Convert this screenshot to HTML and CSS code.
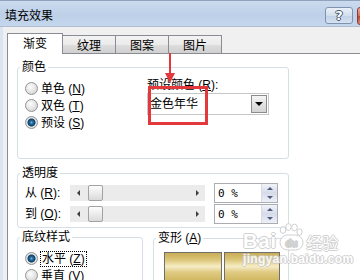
FILE: index.html
```html
<!DOCTYPE html>
<html lang="zh-CN">
<head>
    <meta charset="UTF-8">
    <title>填充效果</title>
    <link rel="stylesheet" href="styles.css">
</head>
<body>

<div class="window">

    <!-- Title bar -->
    <div class="titlebar">
        <span class="title">填充效果</span>
        <span class="help">?</span>
        <span class="close"></span>
    </div>

    <div class="client">

        <!-- Tabs -->
        <div class="tabs">
            <div class="tab active">渐变</div>
            <div class="tab">纹理</div>
            <div class="tab">图案</div>
            <div class="tab">图片</div>
        </div>

        <div class="panel">

            <!-- 颜色 -->
            <div class="group color-group">
                <div class="legend">颜色</div>
                <div class="color-body">
                    <div class="radios">
                        <div class="radio"><span class="dot"></span>单色 (<u>N</u>)</div>
                        <div class="radio"><span class="dot"></span>双色 (<u>T</u>)</div>
                        <div class="radio"><span class="dot on"></span>预设 (<u>S</u>)</div>
                    </div>
                    <div class="preset">
                        <div class="preset-label">预设颜色 (<u>R</u>):</div>
                        <div class="combo">
                            <span class="combo-text">金色年华</span>
                            <span class="combo-btn"></span>
                        </div>
                        <div class="mark-box"></div>
                        <div class="mark-arrow"></div>
                    </div>
                </div>
            </div>

            <!-- 透明度 -->
            <div class="group alpha-group">
                <div class="legend">透明度</div>
                <div class="alpha-rows">
                    <div class="alpha-row">
                        <span class="alpha-label">从 (<u>R</u>):</span>
                        <div class="slider">
                            <span class="arrow-l"></span>
                            <span class="thumb"></span>
                            <span class="arrow-r"></span>
                        </div>
                        <div class="pct">
                            <span>0 %</span>
                            <span class="spin"><i class="up"></i><i class="down"></i></span>
                        </div>
                    </div>
                    <div class="alpha-row">
                        <span class="alpha-label">到 (<u>O</u>):</span>
                        <div class="slider">
                            <span class="arrow-l"></span>
                            <span class="thumb"></span>
                            <span class="arrow-r"></span>
                        </div>
                        <div class="pct">
                            <span>0 %</span>
                            <span class="spin"><i class="up"></i><i class="down"></i></span>
                        </div>
                    </div>
                </div>
            </div>

            <!-- 底纹样式 / 变形 -->
            <div class="bottom">
                <div class="group pattern-group">
                    <div class="legend">底纹样式</div>
                    <div class="pattern-rows">
                        <div class="radio"><span class="dot on"></span><span class="focus">水平 (<u>Z</u>)</span></div>
                        <div class="radio"><span class="dot"></span>垂直 (<u>V</u>)</div>
                    </div>
                </div>
                <div class="group warp-group">
                    <div class="legend">变形 (<u>A</u>)</div>
                    <div class="swatches">
                        <div class="swatch"></div>
                        <div class="swatch second"></div>
                    </div>
                </div>
            </div>

            <!-- watermark -->
            <div class="watermark">
                <div class="wm-top">
                    <span class="wm-bai">Bai</span>
                    <svg class="wm-paw" width="26" height="28" viewBox="0 0 26 28">
                        <ellipse cx="5" cy="7" rx="2.8" ry="3.4" />
                        <ellipse cx="10.5" cy="4" rx="2.8" ry="3.4" />
                        <ellipse cx="16.5" cy="4.5" rx="2.8" ry="3.4" />
                        <ellipse cx="21.5" cy="9" rx="2.6" ry="3.2" />
                        <rect x="2" y="12" width="23" height="15" rx="7.5" />
                        <text x="13.5" y="23.5" text-anchor="middle">du</text>
                    </svg>
                    <span class="wm-jy">经验</span>
                </div>
                <div class="wm-url">jingyan.baidu.com</div>
            </div>

        </div>
    </div>
</div>

</body>
</html>
```

FILE: styles.css
```css
/* General */
* {
    margin: 0;
    padding: 0;
    box-sizing: border-box;
}

body {
    width: 360px;
    height: 280px;
    overflow: hidden;
    background: #f0f0f0;
    color: #000;
    font-family: "Liberation Sans", "Noto Sans CJK SC", sans-serif;
    font-size: 12px;
}

.window {
    width: 360px;
    height: 280px;
    overflow: hidden;
    display: flex;
    flex-direction: column;
}

/* Title bar */
.titlebar {
    height: 27px;
    flex-shrink: 0;
    display: flex;
    align-items: flex-start;
    padding-left: 5px;
    border-top: 1px solid #8fa3bd;
    border-bottom: 1px solid #aebfd4;
    background: linear-gradient(#cadbee, #bdd0e8 55%, #c4d6ec);
}

.title {
    flex: 1;
    margin-top: 7px;
    font-family: "Noto Sans CJK SC", sans-serif;
    line-height: 14px;
}

.help {
    width: 28px;
    height: 17px;
    margin-top: 6px;
    margin-right: 4px;
    flex-shrink: 0;
    display: flex;
    justify-content: center;
    align-items: center;
    border: 1px solid #7f93ae;
    border-radius: 3px;
    background: linear-gradient(#eaf0f8, #d3dfee 50%, #c0d0e6 51%, #d6e2f1);
    color: #fff;
    font: bold 13px "DejaVu Sans", sans-serif;
    text-shadow: -1px 0 #44546c, 1px 0 #44546c, 0 -1px #44546c, 0 1px #44546c;
}

.close {
    width: 43px;
    height: 18px;
    margin-top: 6px;
    margin-right: -40px;
    flex-shrink: 0;
    border: 1px solid #8b3a3a;
    border-radius: 3px;
    background: linear-gradient(#eaa99b, #d4705f 50%, #c2442f 51%, #d98b70);
}

/* Dialog body */
.client {
    flex: 1;
    display: flex;
    flex-direction: column;
    border-left: 3px solid #dbe5f1;
    padding: 6px 0 0 4px;
}

/* Tabs */
.tabs {
    display: flex;
    align-items: flex-end;
    height: 20px;
}

.tab {
    width: 54px;
    height: 18px;
    margin-left: -1px;
    padding-top: 2px;
    border: 1px solid #898c95;
    border-bottom: none;
    background: linear-gradient(#f3f3f3, #ebebeb 50%, #dedede 51%, #d0d0d0);
    text-align: center;
    line-height: 16px;
}

.tab.active {
    width: 56px;
    height: 21px;
    margin-left: 0;
    margin-bottom: -1px;
    padding-top: 2px;
    background: #fff;
    position: relative;
    z-index: 1;
}

/* Panel */
.panel {
    position: relative;
    flex: 1;
    margin-right: -40px;
    padding: 13px 0 0 9px;
    border: 1px solid #898c95;
    background: #fff;
}

.group {
    border: 1px solid #d5dfe5;
    border-radius: 3px;
}

.legend {
    width: fit-content;
    margin: -8px 0 0 2px;
    padding: 0 2px;
    background: #fff;
    line-height: 14px;
}

/* 颜色 */
.color-group {
    width: 272px;
    height: 92px;
}

.color-body {
    display: grid;
    grid-template-columns: 122px auto;
    padding-left: 7px;
}

.radios {
    padding-top: 6px;
}

.radio {
    display: flex;
    align-items: center;
    height: 17px;
    line-height: 14px;
    white-space: pre;
}

.dot {
    width: 13px;
    height: 13px;
    margin-right: 3px;
    flex-shrink: 0;
    border: 1px solid #949494;
    border-radius: 50%;
    background: radial-gradient(circle at 40% 35%, #fdfdfd, #e0e0e0 60%, #c9c9c9);
}

.dot.on {
    background: radial-gradient(circle, #7ab8de 0, #2170a6 1.5px, #0f3e64 3.5px, #e6e6e6 4.5px, #c9c9c9 100%);
}

.preset {
    position: relative;
    padding-top: 4px;
}

.preset-label {
    line-height: 14px;
}

.combo {
    width: 122px;
    height: 22px;
    margin-top: 1px;
    padding: 0 1px 0 2px;
    display: flex;
    align-items: center;
    justify-content: space-between;
    border: 1px solid #c7c7c7;
    background: #fff;
}

.combo-text {
    line-height: 14px;
}

.combo-btn {
    width: 16px;
    height: 18px;
    display: flex;
    justify-content: center;
    align-items: center;
    border: 1px solid #8c8c8c;
    background: linear-gradient(#f6f6f6, #e2e2e2 50%, #d4d4d4);
}

.combo-btn::after {
    content: "";
    border-top: 4px solid #000;
    border-left: 4px solid transparent;
    border-right: 4px solid transparent;
}

/* red annotation */
.mark-box {
    position: absolute;
    left: 1px;
    top: 12px;
    width: 60px;
    height: 39px;
    border: 3px solid #e4393c;
}

.mark-arrow {
    position: absolute;
    left: 22px;
    top: -21px;
    width: 2px;
    height: 22px;
    background: #e4393c;
}

.mark-arrow::after {
    content: "";
    position: absolute;
    left: -4px;
    top: 20px;
    border-top: 10px solid #e4393c;
    border-left: 5px solid transparent;
    border-right: 5px solid transparent;
}

/* 透明度 */
.alpha-group {
    width: 272px;
    height: 55px;
    margin-top: 14px;
}

.alpha-rows {
    display: flex;
    flex-direction: column;
    gap: 1px;
    padding: 3px 0 0 7px;
}

.alpha-row {
    display: flex;
    align-items: center;
    height: 20px;
}

.alpha-label {
    width: 45px;
    line-height: 14px;
    white-space: pre;
}

.slider {
    width: 135px;
    height: 16px;
    display: flex;
    align-items: center;
    background: #ebebeb;
}

.arrow-l {
    margin-left: 7px;
    border-right: 3px solid #3c3c3c;
    border-top: 3px solid transparent;
    border-bottom: 3px solid transparent;
}

.thumb {
    width: 15px;
    height: 16px;
    margin-left: 8px;
    border: 1px solid #a2a2a2;
    border-radius: 2px;
    background: linear-gradient(#fdfdfd, #ececec 50%, #dadada);
}

.arrow-r {
    margin-left: auto;
    margin-right: 6px;
    border-left: 3px solid #3c3c3c;
    border-top: 3px solid transparent;
    border-bottom: 3px solid transparent;
}

.pct {
    width: 64px;
    height: 20px;
    margin-left: 9px;
    padding-left: 3px;
    display: flex;
    align-items: center;
    justify-content: space-between;
    border: 1px solid #abadb3;
    font-family: "DejaVu Sans Mono", monospace;
    font-size: 11px;
}

.spin {
    width: 16px;
    height: 18px;
    display: flex;
    flex-direction: column;
    border-left: 1px solid #d6dbe6;
    background: linear-gradient(#f1f3f9, #d7dcea 48%, #8d97b5 50%, #d7dcea 52%, #eef0f7);
}

.spin i {
    flex: 1;
    display: flex;
    justify-content: center;
    align-items: center;
}

.spin .up::after {
    content: "";
    border-bottom: 3px solid #4f5b7c;
    border-left: 3px solid transparent;
    border-right: 3px solid transparent;
}

.spin .down::after {
    content: "";
    border-top: 3px solid #4f5b7c;
    border-left: 3px solid transparent;
    border-right: 3px solid transparent;
}

/* 底纹样式 / 变形 */
.bottom {
    display: flex;
    align-items: flex-start;
    gap: 10px;
    margin-top: 9px;
}

.pattern-group {
    width: 126px;
    height: 70px;
}

.pattern-rows {
    padding: 6px 0 0 7px;
}

.focus {
    outline: 1px dotted #000;
    padding: 0 1px;
}

.warp-group {
    width: 136px;
    height: 70px;
    margin-top: 1px;
}

.swatches {
    display: flex;
    gap: 2px;
    margin-top: 7px;
    padding-left: 10px;
}

.swatch {
    width: 58px;
    height: 40px;
    border: 1px solid #6f6f6f;
    background: linear-gradient(#c9ad55 0%, #dcc57a 18%, #efe2ac 30%, #f5ecc6 36%, #e0cb84 50%, #d2b964 70%, #c5a748 100%);
}

.swatch.second {
    width: 56px;
}

/* watermark */
.watermark {
    position: absolute;
    left: 235px;
    top: 169px;
    color: #fff;
    opacity: 0.85;
    text-shadow: -1px 0 #c9c9c9, 1px 0 #c9c9c9, 0 -1px #c9c9c9, 0 1px #c9c9c9;
}

.wm-top {
    display: flex;
    align-items: flex-end;
}

.wm-bai {
    font: bold 20px/20px "Liberation Sans", sans-serif;
    letter-spacing: 1px;
}

.wm-paw {
    margin: 0 2px 0 1px;
}

.wm-paw ellipse,
.wm-paw rect {
    fill: #fff;
    stroke: #c9c9c9;
}

.wm-paw text {
    fill: #c9c9c9;
    font: bold 10px "Liberation Sans", sans-serif;
}

.wm-jy {
    font: 16px/18px "Noto Sans CJK SC", sans-serif;
}

.wm-url {
    margin-top: 2px;
    font: bold 12px/13px "Liberation Sans", sans-serif;
    letter-spacing: 0.3px;
}
```
